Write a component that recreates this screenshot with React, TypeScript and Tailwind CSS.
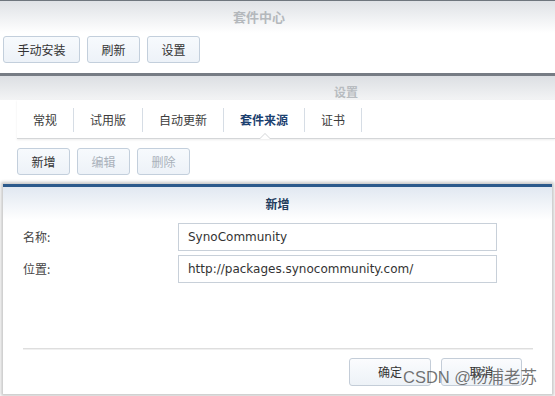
import React from "react";

const cjk = { fontFamily: '"Noto Sans CJK SC", "DejaVu Sans", sans-serif' };

function Btn({ children, disabled, w }: { children: React.ReactNode; disabled?: boolean; w: string }) {
  return (
    <div
      className={`${w} h-[27px] flex items-center justify-center rounded-[3px] border border-[#c3cfdc] bg-gradient-to-b from-[#f7fafd] to-[#edf2f8] text-[12px] ${
        disabled ? "text-[#a9b1ba]" : "text-[#333]"
      }`}
    >
      {children}
    </div>
  );
}

const tabs = ["常规", "试用版", "自动更新", "套件来源", "证书"];

export default function App() {
  return (
    <div className="w-[555px] h-[396px] overflow-hidden bg-white relative" style={cjk}>
      {/* Package center window */}
      <div className="border-t border-[#6f767e]">
        <div className="h-[32px] bg-gradient-to-b from-[#dfe2e6] to-[#ffffff] flex items-center pl-[233px]">
          <span className="text-[13px] font-bold text-[#b4b8bc]">套件中心</span>
        </div>
        <div className="flex gap-[7px] pl-[3px] pt-[3px] h-[40px]">
          <Btn w="w-[77px]">手动安装</Btn>
          <Btn w="w-[53px]">刷新</Btn>
          <Btn w="w-[53px]">设置</Btn>
        </div>
        <div className="h-[3px] bg-[#767c84]" />
      </div>

      {/* Settings window */}
      <div className="bg-gradient-to-b from-[#dcdfe3] to-[#f3f4f5] h-[24px] flex items-end pl-[334px]">
        <span className="text-[12px] font-bold text-[#b8bcc0] leading-none mb-[2px]">设置</span>
      </div>
      <div className="bg-white">
        <div className="ml-[17px] h-[39px] flex items-stretch relative border-b border-[#d4d6d8] shadow-[0_1px_2px_rgba(0,0,0,0.08)]">
          {tabs.map((t, i) => (
            <div key={t} className="flex items-center pt-[2px] relative">
              <span
                className={`px-[16px] text-[12px] ${i === 3 ? "font-bold text-[#1c4170]" : "text-[#3c3c3c]"}`}
              >
                {t}
              </span>
              <div className="w-px h-[24px] bg-[#d6dde5]" />
              {i === 3 && (
                <div className="absolute left-1/2 -translate-x-1/2 bottom-[-1px] w-0 h-0 border-l-[6px] border-r-[6px] border-b-[6px] border-l-transparent border-r-transparent border-b-[#d4d6d8]">
                  <div className="absolute left-[-5px] top-[1px] w-0 h-0 border-l-[5px] border-r-[5px] border-b-[5px] border-l-transparent border-r-transparent border-b-white" />
                </div>
              )}
            </div>
          ))}
        </div>
        <div className="flex gap-[7px] pl-[17px] pt-[9px] h-[45px]">
          <Btn w="w-[53px]">新增</Btn>
          <Btn w="w-[53px]" disabled>编辑</Btn>
          <Btn w="w-[53px]" disabled>删除</Btn>
        </div>
      </div>

      {/* Dialog */}
      <div className="ml-[3px] w-[549px] h-[210px] bg-white border-t-[3px] border-[#2c5a8c] shadow-[0_0_3px_2px_rgba(0,0,0,0.22)] flex flex-col">
        <div className="h-[33px] bg-gradient-to-b from-[#e1e8f1] to-[#ffffff] flex items-center justify-center">
          <span className="text-[12px] font-bold text-[#223b5c]">新增</span>
        </div>
        <div className="flex flex-col gap-[4px] pl-[20px] pt-[3px]">
          {[
            ["名称:", "SynoCommunity"],
            ["位置:", "http://packages.synocommunity.com/"],
          ].map(([l, v]) => (
            <div key={l} className="flex items-center h-[28px]">
              <span className="w-[155px] text-[12px] text-[#444]">{l}</span>
              <div
                className="w-[319px] h-[28px] border border-[#c8d0d9] flex items-center pl-[9px] text-[12px] text-[#333]"
                style={{ fontFamily: '"DejaVu Sans", sans-serif' }}
              >
                {v}
              </div>
            </div>
          ))}
        </div>
        <div className="mt-[65px] ml-[20px] w-[510px] h-[2px] bg-[#dedede] border-b border-[#f0f0f0]" />
        <div className="flex gap-[10px] pl-[346px] pt-[8px]">
          <div className="w-[82px] h-[28px] rounded-[3px] border border-[#c4cdd8] bg-gradient-to-b from-[#fbfcfe] to-[#edf2f7] flex items-center justify-center text-[12px] text-[#333]">
            确定
          </div>
          <div className="w-[81px] h-[28px] rounded-[3px] border border-[#c4cdd8] bg-gradient-to-b from-[#fbfcfe] to-[#edf2f7] flex items-center justify-center text-[12px] text-[#333]">
            取消
          </div>
        </div>
      </div>

      {/* Watermark */}
      <div
        className="absolute left-[403px] top-[369px] text-[16.5px] text-[rgba(70,70,70,0.75)] whitespace-nowrap leading-none"
        style={{ fontFamily: '"Liberation Sans", "Noto Sans CJK SC", sans-serif' }}
      >
        CSDN @杨浦老苏
      </div>
    </div>
  );
}
